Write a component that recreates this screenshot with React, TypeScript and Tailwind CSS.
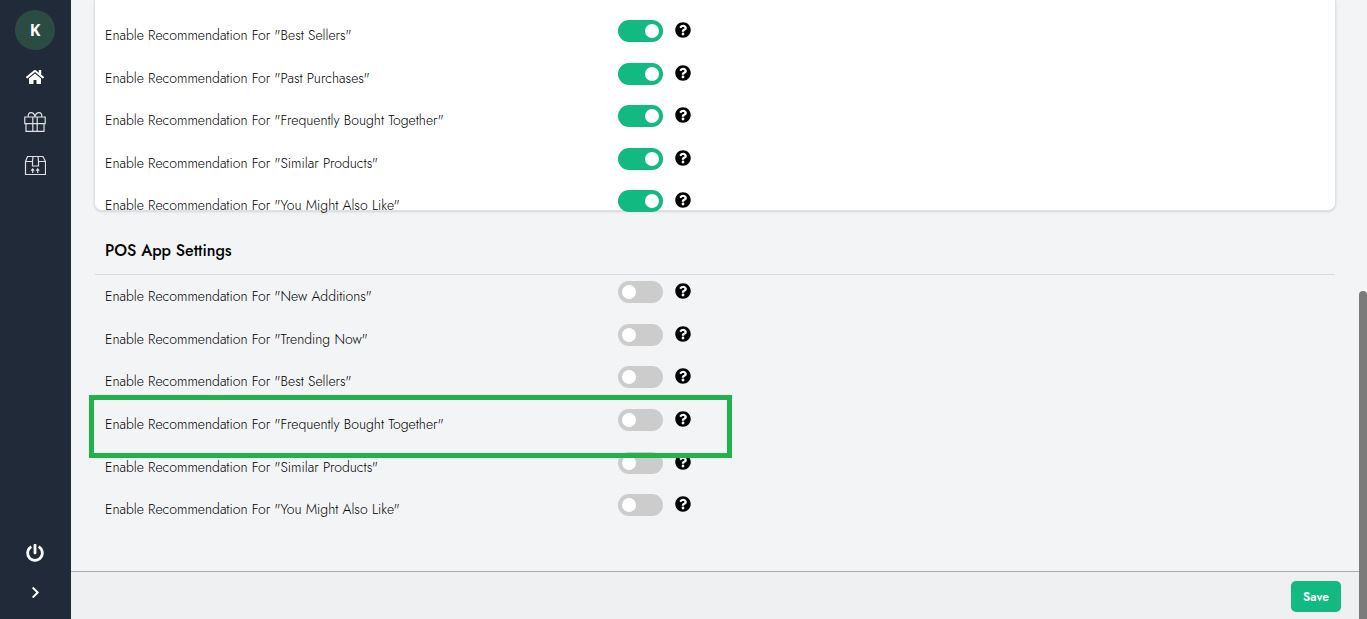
import { useState } from "react";
import clsx from "clsx";
import { FaChevronRight, FaHome, FaPowerOff, FaQuestionCircle } from "react-icons/fa";

type Setting = {
  id: string;
  label: string;
  enabled: boolean;
  highlighted?: boolean;
};

const onlineSettings: Setting[] = [
  { id: "online-best-sellers", label: "Best Sellers", enabled: true },
  { id: "online-past-purchases", label: "Past Purchases", enabled: true },
  { id: "online-bought-together", label: "Frequently Bought Together", enabled: true },
  { id: "online-similar", label: "Similar Products", enabled: true },
  { id: "online-also-like", label: "You Might Also Like", enabled: true },
];

const posSettings: Setting[] = [
  { id: "pos-new-additions", label: "New Additions", enabled: false },
  { id: "pos-trending", label: "Trending Now", enabled: false },
  { id: "pos-best-sellers", label: "Best Sellers", enabled: false },
  {
    id: "pos-bought-together",
    label: "Frequently Bought Together",
    enabled: false,
    highlighted: true,
  },
  { id: "pos-similar", label: "Similar Products", enabled: false },
  { id: "pos-also-like", label: "You Might Also Like", enabled: false },
];

function GiftIcon() {
  return (
    <svg
      aria-hidden="true"
      width="22"
      height="22"
      viewBox="0 0 22 22"
      fill="none"
      stroke="#dfe1e4"
      strokeWidth="1.2"
    >
      <path d="M.8 6h20.400v6.600H.8zM2 12.600v7.800h18v-7.800M8.800 6v14.400M13.200 6v14.400" />
      <path d="M4.400 6C3.600 3.200 5 1.700 7 1.700S10.600 3.200 11 6c.4-2.800 2-4.300 4-4.300s3.400 1.500 2.600 4.300" />
    </svg>
  );
}

function PackageIcon() {
  return (
    <svg
      aria-hidden="true"
      width="22"
      height="22"
      viewBox="0 0 22 22"
      fill="none"
      stroke="#dfe1e4"
      strokeWidth="1.2"
    >
      <path d="M3.500 1.500h15.500l2.500 5v13H1.500v-13zM1.500 6.500h6.700M14.300 6.500h7.200M9 1.500l-.5 5v4.500h6V6.500l-.5-5" />
      <path d="M8.700 18v-4M7.200 15.600l1.500-1.700 1.500 1.700M13.700 18v-4M12.200 15.600l1.500-1.700 1.500 1.700" />
    </svg>
  );
}

function Sidebar() {
  return (
    <nav
      aria-label="Main"
      className="flex w-[71px] shrink-0 flex-col items-center bg-[#212a38] pt-2.5 pr-px pb-5 text-white"
    >
      <span className="grid size-10 place-items-center rounded-full bg-[#2b4c43] font-['Open_Sans',sans-serif] text-base font-bold">
        K
      </span>
      <a href="#home" aria-label="Home" className="mt-[18px]">
        <FaHome size={18} />
      </a>
      <a href="#gifts" aria-label="Gifts" className="mt-[25px]">
        <GiftIcon />
      </a>
      <a href="#products" aria-label="Products" className="mt-[22px]">
        <PackageIcon />
      </a>
      <button type="button" aria-label="Log out" className="mt-auto">
        <FaPowerOff size={18} />
      </button>
      <button type="button" aria-label="Expand menu" className="mt-6">
        <FaChevronRight size={13} />
      </button>
    </nav>
  );
}

function SettingRow({ setting }: { setting: Setting }) {
  const [enabled, setEnabled] = useState(setting.enabled);

  return (
    <div className="relative flex items-start">
      <label
        htmlFor={setting.id}
        className="w-[513px] pt-[5px] text-sm font-light text-black"
      >
        {`Enable Recommendation For "${setting.label}"`}
      </label>
      <input
        id={setting.id}
        type="checkbox"
        role="switch"
        checked={enabled}
        onChange={(event) => setEnabled(event.target.checked)}
        className="h-[22px] w-[45px] shrink-0 cursor-pointer appearance-none rounded-full bg-[#ccc] p-1 before:block before:size-3.5 before:rounded-full before:bg-white checked:bg-[#12b981] checked:before:translate-x-[23px]"
      />
      <button
        type="button"
        aria-label={`About ${setting.label}`}
        className="mt-0.5 ml-3 text-black"
      >
        <FaQuestionCircle size={16} />
      </button>
      {setting.highlighted && (
        <div className="pointer-events-none absolute -top-3.5 -left-4 z-10 h-[63px] w-[643px] border-5 border-[#22b14c]" />
      )}
    </div>
  );
}

function SettingList({ settings, className }: { settings: Setting[]; className: string }) {
  return (
    <div className={clsx("grid auto-rows-fr px-2.5", className)}>
      {settings.map((setting) => (
        <SettingRow key={setting.id} setting={setting} />
      ))}
    </div>
  );
}

export default function App() {
  return (
    <div className="flex h-screen bg-[#f3f4f6] font-['Jost','Lato',sans-serif]">
      <Sidebar />
      <div className="flex min-w-0 flex-1 flex-col">
        <main className="min-h-0 flex-1 overflow-hidden px-[23px]">
          {/* the last row hangs over the card's bottom edge */}
          <section
            aria-label="Online store settings"
            className="rounded-b-lg border border-t-0 border-[#dfe1e6] bg-white pt-5 shadow-sm"
          >
            <SettingList settings={onlineSettings} className="-mb-[23px] h-[213px]" />
          </section>
          <section className="px-px">
            <h2 className="border-b border-[#d8dadd] px-2.5 pt-7 pb-[11px] text-base font-medium text-black">
              POS App Settings
            </h2>
            <SettingList settings={posSettings} className="mt-1.5 h-64" />
          </section>
        </main>
        <footer className="flex h-12 shrink-0 items-center justify-end border-t border-[#a9abaf] bg-[#eff0f2] pt-0.5 pr-[18px]">
          <button
            type="button"
            className="h-[31px] rounded-[5px] bg-[#12b981] px-3 text-xs font-semibold text-white"
          >
            Save
          </button>
        </footer>
      </div>
      <div aria-hidden="true" className="flex w-2 shrink-0 flex-col justify-end">
        <div className="h-[53%] rounded-t-full bg-[#7b7b7b]" />
      </div>
    </div>
  );
}
